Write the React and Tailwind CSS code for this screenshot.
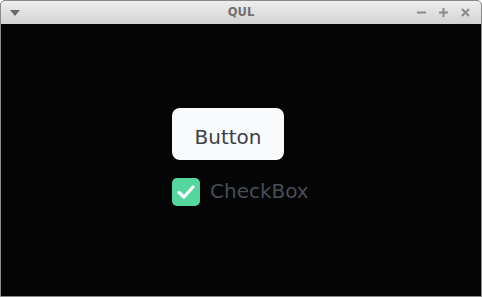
import React from "react";

export default function App() {
  return (
    <div className="w-[482px] h-[297px] flex flex-col bg-[#3a3a3a] rounded-t-[5px] overflow-hidden border border-[#8a8a8a]" style={{ fontFamily: '"DejaVu Sans", sans-serif' }}>
      <div className="h-[23px] flex items-center bg-gradient-to-b from-[#eeeeee] to-[#d3d3d3] relative shrink-0">
        <svg width="10" height="6" viewBox="0 0 10 6" className="ml-[9px]">
          <path d="M0 0 L10 0 L5 6 Z" fill="#6a6a6a" />
        </svg>
        <div className="absolute inset-0 flex items-center justify-center text-[11.5px] font-bold text-[#707070]">QUL</div>
        <div className="ml-auto mr-[10px] flex items-center gap-[11px]">
          <svg width="11" height="11" viewBox="0 0 11 11"><rect x="1" y="4.5" width="9" height="2" fill="#8a8a8a" /></svg>
          <svg width="11" height="11" viewBox="0 0 11 11"><rect x="1" y="4.5" width="9" height="2" fill="#8a8a8a" /><rect x="4.5" y="1" width="2" height="9" fill="#8a8a8a" /></svg>
          <svg width="11" height="11" viewBox="0 0 11 11"><path d="M2 2 L9 9 M9 2 L2 9" stroke="#8a8a8a" strokeWidth="2" /></svg>
        </div>
      </div>
      <div className="flex-1 bg-[#050505] flex flex-col items-start pl-[171px] pt-[84px]">
        <div className="w-[112px] h-[52px] rounded-[8px] bg-[#f8fafc] flex items-center justify-center pt-[6px] text-[20px] text-[#3b4149]">Button</div>
        <div className="mt-[18px] flex items-start">
          <div className="w-[28px] h-[28px] rounded-[5px] bg-[#55d69f] flex items-center justify-center">
            <svg width="20" height="16" viewBox="0 0 20 16">
              <path d="M3 8.5 L8 13 L17 3" stroke="#ffffff" strokeWidth="3.2" fill="none" strokeLinecap="round" strokeLinejoin="round" />
            </svg>
          </div>
          <span className="ml-[10px] leading-[26px] text-[20px] text-[#474d55]">CheckBox</span>
        </div>
      </div>
    </div>
  );
}
